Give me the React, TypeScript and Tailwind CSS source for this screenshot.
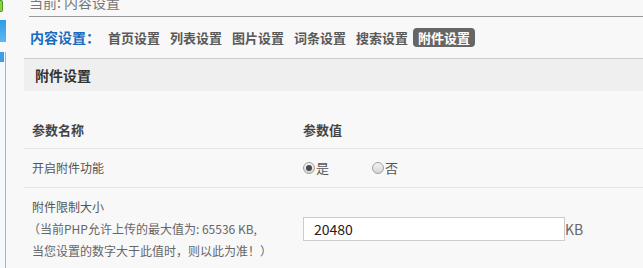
import React from "react";

const font = { fontFamily: '"Microsoft YaHei", "Noto Sans CJK SC", "Noto Sans", sans-serif' };

function Radio({ checked }: { checked?: boolean }) {
  return (
    <span className="inline-flex h-[12px] w-[12px] items-center justify-center rounded-full border border-[#a0a0a0] bg-gradient-to-b from-[#f4f4f4] to-[#d6d6d6]">
      {checked ? <span className="h-[6px] w-[6px] rounded-full bg-[#4a4a4a]" /> : null}
    </span>
  );
}

export default function App() {
  const tabs = ["首页设置", "列表设置", "图片设置", "词条设置", "搜索设置", "附件设置"];
  return (
    <div className="flex h-[268px] w-[643px] overflow-hidden bg-[#f8f8f8]" style={font}>
      {/* left strip */}
      <div className="flex w-[6px] flex-col">
        <div className="h-[12px] w-[3px] rounded-r-[2px] border border-l-0 border-[#4c9a1c] bg-[#8cd04a]" />
        <div className="h-[8px]" />
        <div className="h-[22px] w-[6px] bg-gradient-to-b from-[#2f9be6] to-[#5ab8f0]" />
        <div className="h-[10px]" />
        <div className="flex flex-1 flex-col border-r border-[#8fbbe0] bg-[#f3f8fc]">
          <div className="h-[10px] w-[4px] bg-[#3a9fe6]" />
        </div>
      </div>

      {/* main */}
      <div className="flex flex-1 flex-col pl-[18px]">
        <div className="ml-[5px] h-[17px] overflow-hidden border-b border-[#999]">
          <div className="-mt-[7px] whitespace-nowrap text-[14px] leading-[18px] text-[#777]">当前: 内容设置</div>
        </div>

        <div className="flex h-[41px] items-center pl-[6px]">
          <span className="text-[14px] font-bold text-[#1a6ac0]">内容设置：</span>
          <div className="ml-[3px] flex items-center">
            {tabs.map((t, i) => (
              <span
                key={t}
                className={
                  i === tabs.length - 1
                    ? "flex h-[19px] items-center rounded-[4px] bg-[#666] px-[5px] text-[13px] font-bold leading-none text-white"
                    : "flex h-[19px] items-center px-[5px] text-[13px] font-bold leading-none text-[#595959]"
                }
              >
                {t}
              </span>
            ))}
          </div>
        </div>

        <div className="flex h-[33px] items-center border-t border-[#ccc] bg-[#efefef] pl-[11px]">
          <span className="text-[14px] font-bold text-[#333]">附件设置</span>
        </div>

        <div className="mt-[21px] flex h-[37px] items-center border-b border-[#e5e5e5] text-[13px] font-bold text-[#444]">
          <div className="w-[279px] pl-[8px]">参数名称</div>
          <div>参数值</div>
        </div>

        <div className="flex h-[39px] items-center border-b border-[#e5e5e5] text-[12px] text-[#555]">
          <div className="w-[279px] pl-[8px]">开启附件功能</div>
          <div className="flex items-center">
            <Radio checked />
            <span className="ml-[1px] text-[13px]">是</span>
            <span className="ml-[43px] flex items-center">
              <Radio />
              <span className="ml-[1px] text-[13px]">否</span>
            </span>
          </div>
        </div>

        <div className="flex items-center pt-[8px] text-[12px] text-[#555]">
          <div className="w-[279px] pl-[8px] leading-[22px]">
            <div>附件限制大小</div>
            <div className="-ml-[4px] whitespace-nowrap text-[#666]">（当前PHP允许上传的最大值为: 65536 KB,</div>
            <div className="whitespace-nowrap text-[#666]">当您设置的数字大于此值时，则以此为准！）</div>
          </div>
          <div className="flex items-center">
            <div className="flex h-[24px] w-[262px] items-center border border-[#ccc] bg-white pl-[10px] text-[14px] text-[#222]">
              20480
            </div>
            <span className="text-[14px] text-[#666]">KB</span>
          </div>
        </div>
      </div>
    </div>
  );
}
